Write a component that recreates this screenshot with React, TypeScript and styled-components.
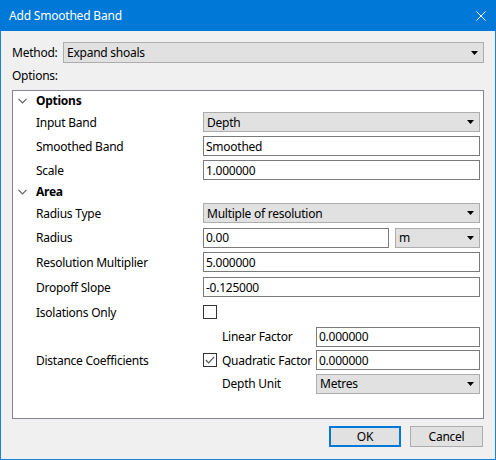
import React from 'react';
import styled, { createGlobalStyle } from 'styled-components';

const Global = createGlobalStyle`
  html, body { margin: 0; padding: 0; background: #ffffff; }
  body {
    font-family: "Noto Sans", "Segoe UI", sans-serif;
    font-size: 12px;
    letter-spacing: -0.25px;
    color: #000000;
  }
  * { box-sizing: border-box; }
`;

const Window = styled.div`
  width: 496px;
  height: 460px;
  border: 1px solid #1883d7;
  border-top: none;
  background: #f0f0f0;
  display: flex;
  flex-direction: column;
`;

const TitleBar = styled.div`
  height: 31px;
  margin: 0 -1px;
  background: #0078d7;
  color: #ffffff;
  display: flex;
  align-items: center;
  justify-content: space-between;
  padding: 0 10px 0 9px;
  font-size: 12px;
  letter-spacing: -0.2px;
`;

const CloseIcon = styled.svg`
  width: 10px;
  height: 10px;
  display: block;
`;

const Body = styled.div`
  flex: 1;
  display: flex;
  flex-direction: column;
  padding: 11px 11px 12px 11px;
  min-height: 0;
`;

const MethodRow = styled.div`
  display: flex;
  align-items: center;
  height: 21px;
`;

const MethodLabel = styled.span`
  width: 51px;
  flex: none;
`;

const Combo = styled.div<{ $h?: number; $w?: number }>`
  height: ${(p) => p.$h ?? 20}px;
  ${(p) => (p.$w ? `width: ${p.$w}px; flex: none;` : 'flex: 1;')}
  min-width: 0;
  background: #e1e1e1;
  border: 1px solid #adadad;
  display: flex;
  align-items: center;
  justify-content: space-between;
  padding: 0 5px 0 3px;
`;

const Arrow = styled.svg`
  width: 7px;
  height: 4px;
  display: block;
  flex: none;
`;

const TextBox = styled.div`
  height: 20px;
  flex: 1;
  min-width: 0;
  background: #ffffff;
  border: 1px solid #7a7a7a;
  display: flex;
  align-items: center;
  padding: 0 2px;
`;

const SectionLabel = styled.div`
  margin-top: 5px;
  line-height: 16px;
  margin-bottom: 6px;
`;

const Panel = styled.div`
  flex: 1;
  background: #ffffff;
  border: 1px solid #828790;
  display: flex;
  flex-direction: column;
`;

const GroupRow = styled.div`
  height: 19px;
  display: flex;
  align-items: center;
  font-weight: 700;
`;

const Chevron = styled.svg`
  width: 9px;
  height: 6px;
  margin: 0 9px 0 5px;
  display: block;
`;

const FieldRow = styled.div<{ $h: number }>`
  height: ${(p) => p.$h}px;
  display: grid;
  grid-template-columns: 190px 1fr;
  align-items: center;
  padding-right: 3px;
`;

const FieldLabel = styled.span`
  padding-left: 23px;
`;

const Value = styled.div`
  display: flex;
  align-items: center;
  gap: 6px;
  min-width: 0;
`;

const CheckBox = styled.div`
  width: 14px;
  height: 14px;
  border: 1px solid #333333;
  background: #ffffff;
  display: flex;
  align-items: center;
  justify-content: center;
`;

const SubGrid = styled.div`
  display: grid;
  grid-template-columns: 19px 94px 1fr;
  grid-auto-rows: 23.5px;
  align-items: center;
`;

const ButtonRow = styled.div`
  margin-top: 7px;
  display: flex;
  justify-content: flex-end;
  gap: 9px;
  padding-right: 1px;
`;

const Button = styled.div<{ $default?: boolean }>`
  height: 21px;
  width: ${(p) => (p.$default ? 72 : 73)}px;
  background: #e1e1e1;
  border: ${(p) => (p.$default ? '2px solid #0078d7' : '1px solid #adadad')};
  display: flex;
  align-items: center;
  justify-content: center;
`;

const DropArrow = () => (
  <Arrow viewBox="0 0 7 4">
    <polygon points="0,0 7,0 3.5,4" fill="#000" />
  </Arrow>
);

const ComboBox = ({ text, h, w }: { text: string; h?: number; w?: number }) => (
  <Combo $h={h} $w={w}>
    <span>{text}</span>
    <DropArrow />
  </Combo>
);

const Group = ({ title }: { title: string }) => (
  <GroupRow>
    <Chevron viewBox="0 0 9 6">
      <polyline points="0.5,0.8 4.5,4.8 8.5,0.8" fill="none" stroke="#5f5f5f" strokeWidth="1.2" />
    </Chevron>
    <span>{title}</span>
  </GroupRow>
);

const Check = ({ checked }: { checked?: boolean }) => (
  <CheckBox>
    {checked && (
      <svg width="10" height="8" viewBox="0 0 10 8">
        <polyline points="0.8,4 3.6,6.8 9.2,0.8" fill="none" stroke="#555" strokeWidth="1.2" />
      </svg>
    )}
  </CheckBox>
);

export default function App() {
  return (
    <>
      <Global />
      <Window>
        <TitleBar>
          <span>Add Smoothed Band</span>
          <CloseIcon viewBox="0 0 10 10">
            <path d="M0.5 0.5 L9.5 9.5 M9.5 0.5 L0.5 9.5" stroke="#fff" strokeWidth="1" />
          </CloseIcon>
        </TitleBar>
        <Body>
          <MethodRow>
            <MethodLabel>Method:</MethodLabel>
            <ComboBox text="Expand shoals" h={21} />
          </MethodRow>
          <SectionLabel>Options:</SectionLabel>
          <Panel>
            <Group title="Options" />
            <FieldRow $h={24}>
              <FieldLabel>Input Band</FieldLabel>
              <Value><ComboBox text="Depth" /></Value>
            </FieldRow>
            <FieldRow $h={24}>
              <FieldLabel>Smoothed Band</FieldLabel>
              <Value><TextBox>Smoothed</TextBox></Value>
            </FieldRow>
            <FieldRow $h={24}>
              <FieldLabel>Scale</FieldLabel>
              <Value><TextBox>1.000000</TextBox></Value>
            </FieldRow>
            <Group title="Area" />
            <FieldRow $h={24.5}>
              <FieldLabel>Radius Type</FieldLabel>
              <Value><ComboBox text="Multiple of resolution" /></Value>
            </FieldRow>
            <FieldRow $h={24.5}>
              <FieldLabel>Radius</FieldLabel>
              <Value>
                <TextBox>0.00</TextBox>
                <ComboBox text="m" w={85} />
              </Value>
            </FieldRow>
            <FieldRow $h={24.5}>
              <FieldLabel>Resolution Multiplier</FieldLabel>
              <Value><TextBox>5.000000</TextBox></Value>
            </FieldRow>
            <FieldRow $h={25}>
              <FieldLabel>Dropoff Slope</FieldLabel>
              <Value><TextBox>-0.125000</TextBox></Value>
            </FieldRow>
            <FieldRow $h={25.5}>
              <FieldLabel>Isolations Only</FieldLabel>
              <Value><Check /></Value>
            </FieldRow>
            <FieldRow $h={70.5}>
              <FieldLabel>Distance Coefficients</FieldLabel>
              <SubGrid>
                <span />
                <span>Linear Factor</span>
                <TextBox>0.000000</TextBox>
                <Check checked />
                <span>Quadratic Factor</span>
                <TextBox>0.000000</TextBox>
                <span />
                <span>Depth Unit</span>
                <ComboBox text="Metres" />
              </SubGrid>
            </FieldRow>
          </Panel>
          <ButtonRow>
            <Button $default>OK</Button>
            <Button>Cancel</Button>
          </ButtonRow>
        </Body>
      </Window>
    </>
  );
}
